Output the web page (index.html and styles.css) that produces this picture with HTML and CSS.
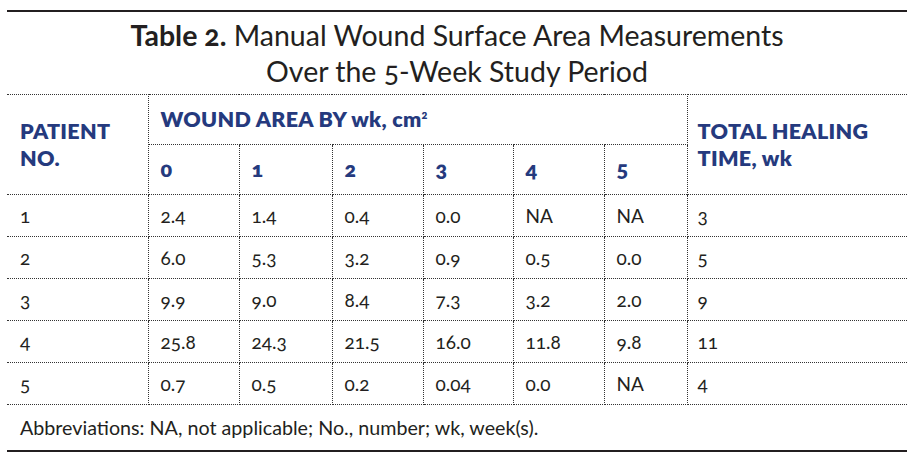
FILE: index.html
```html
<!DOCTYPE html>
<html lang="en">
<head>
<meta charset="utf-8">
<title>Table 2</title>
<link rel="stylesheet" href="styles.css">
</head>
<body>
<div class="table-wrap">
  <h1 class="caption"><b>Table 2.</b> Manual Wound Surface Area Measurements<br>Over the 5-Week Study Period</h1>
  <table class="data">
    <colgroup>
      <col class="c-pat"><col class="c-w1"><col class="c-w2"><col class="c-w3"><col class="c-w4"><col class="c-w5"><col class="c-w6"><col class="c-tot">
    </colgroup>
    <thead>
      <tr class="h1">
        <th rowspan="2" class="pat">PATIENT<br>NO.</th>
        <th colspan="6">WOUND AREA BY wk, cm<sup>2</sup></th>
        <th rowspan="2" class="tot">TOTAL HEALING<br>TIME, wk</th>
      </tr>
      <tr class="h2">
        <th class="num">0</th><th class="num">1</th><th class="num">2</th><th class="num">3</th><th class="num">4</th><th class="num">5</th>
      </tr>
    </thead>
    <tbody>
      <tr><td>1</td><td>2.4</td><td>1.4</td><td>0.4</td><td>0.0</td><td>NA</td><td>NA</td><td>3</td></tr>
      <tr><td>2</td><td>6.0</td><td>5.3</td><td>3.2</td><td>0.9</td><td>0.5</td><td>0.0</td><td>5</td></tr>
      <tr><td>3</td><td>9.9</td><td>9.0</td><td>8.4</td><td>7.3</td><td>3.2</td><td>2.0</td><td>9</td></tr>
      <tr><td>4</td><td>25.8</td><td>24.3</td><td>21.5</td><td>16.0</td><td>11.8</td><td>9.8</td><td>11</td></tr>
      <tr><td>5</td><td>0.7</td><td>0.5</td><td>0.2</td><td>0.04</td><td>0.0</td><td>NA</td><td>4</td></tr>
    </tbody>
  </table>
  <p class="note">Abbreviations: NA, not applicable; No., number; wk, week(s).</p>
</div>
</body>
</html>
```
FILE: styles.css
```css
html, body {
  margin: 0;
  padding: 0;
  background: #ffffff;
}
body {
  font-family: "Lato", "Open Sans", sans-serif;
  color: #231f20;
  font-variant-numeric: oldstyle-nums;
}
.table-wrap {
  width: 900px;
  margin: 10px 0 0 7px;
  border-top: 2px solid #231f20;
  border-bottom: 2px solid #231f20;
}
.caption {
  margin: 0;
  height: 82px;
  box-sizing: border-box;
  padding-top: 5px;
  text-align: center;
  font-size: 28.5px;
  line-height: 36px;
  font-weight: 400;
}
.caption b { font-weight: 700; }
.data {
  width: 900px;
  border-collapse: collapse;
  table-layout: fixed;
}
.c-pat { width: 141px; }
.c-w1 { width: 91px; }
.c-w2 { width: 93px; }
.c-w3 { width: 91px; }
.c-w4 { width: 90px; }
.c-w5 { width: 91px; }
.c-w6 { width: 83px; }
.c-tot { width: 220px; }
.data th, .data td {
  border: 1px dotted #333;
  text-align: left;
  padding: 0 0 0 12px;
  vertical-align: middle;
}
.data tr > :first-child { border-left: none; }
.data tr > :last-child { border-right: none; }
.data tr.h2 > :last-child { border-right: 1px dotted #333; }
.data tr.h2 > :first-child { border-left: 1px dotted #333; }
.data th {
  color: #253a7e;
  font-weight: 800;
  font-size: 21.5px;
  line-height: 27px;
  letter-spacing: 0.3px;
}
.data th.pat { padding-left: 13px; }
.data th.tot { padding-left: 10px; }
.data tr.h1 { height: 50px; }
.data tr.h2 { height: 50px; }
.data sup { font-size: 11px; vertical-align: 8px; line-height: 0; }
.data td {
  font-size: 19px;
  height: 41px;
}
.data td:last-child { padding-left: 10px; }
.data td:first-child { padding-left: 13px; }
.note {
  margin: 0;
  height: 45px;
  padding-left: 13px;
  font-size: 19.7px;
  line-height: 45px;
}
```
